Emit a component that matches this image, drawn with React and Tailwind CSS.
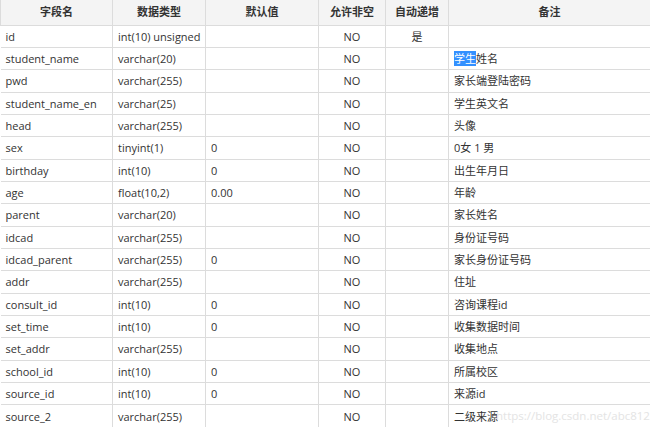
const rows = [
["id","int(10) unsigned","","NO","是",""],
["student_name","varchar(20)","","NO","","学生姓名"],
["pwd","varchar(255)","","NO","","家长端登陆密码"],
["student_name_en","varchar(25)","","NO","","学生英文名"],
["head","varchar(255)","","NO","","头像"],
["sex","tinyint(1)","0","NO","","0女 1 男"],
["birthday","int(10)","0","NO","","出生年月日"],
["age","float(10,2)","0.00","NO","","年龄"],
["parent","varchar(20)","","NO","","家长姓名"],
["idcad","varchar(255)","","NO","","身份证号码"],
["idcad_parent","varchar(255)","0","NO","","家长身份证号码"],
["addr","varchar(255)","","NO","","住址"],
["consult_id","int(10)","0","NO","","咨询课程id"],
["set_time","int(10)","0","NO","","收集数据时间"],
["set_addr","varchar(255)","","NO","","收集地点"],
["school_id","int(10)","0","NO","","所属校区"],
["source_id","int(10)","0","NO","","来源id"],
["source_2","varchar(255)","","NO","","二级来源"],
];
const widths=[112,93,113,67,63,202];
const heads=["字段名","数据类型","默认值","允许非空","自动递增","备注"];
export default function App(){
  return (
    <div className="w-[650px] h-[427px] overflow-hidden bg-white relative text-[11px] text-[#333]" style={{fontFamily:'"Open Sans","Noto Sans CJK SC",sans-serif'}}>
      <table className="border-collapse table-fixed w-[651px]">
        <colgroup>{widths.map((w,i)=><col key={i} style={{width:w}}/>)}</colgroup>
        <thead><tr className="h-[25px] bg-[#f4f4f4]">
          {heads.map((h,i)=><th key={i} className="border border-[#dcdcdc] font-bold text-center text-[#333] border-t-0">{h}</th>)}
        </tr></thead>
        <tbody>
          {rows.map((r,ri)=><tr key={ri} className="h-[22.35px]">
            {r.map((c,ci)=><td key={ci} className={"border border-[#dcdcdc] px-[5px] leading-none whitespace-nowrap "+(ci>=3&&ci<=4?"text-center":"")+(ci===0?" border-l-0":"")}>
              {ri===1&&ci===5?<><span className="bg-[#3390ff] text-white">学生</span>姓名</>:c}
            </td>)}
          </tr>)}
        </tbody>
      </table>
      <div className="absolute left-[496px] top-[407px] text-[11.5px] text-[#e4e4e4] whitespace-nowrap">https://blog.csdn.net/abc8125</div>
    </div>
  );
}
